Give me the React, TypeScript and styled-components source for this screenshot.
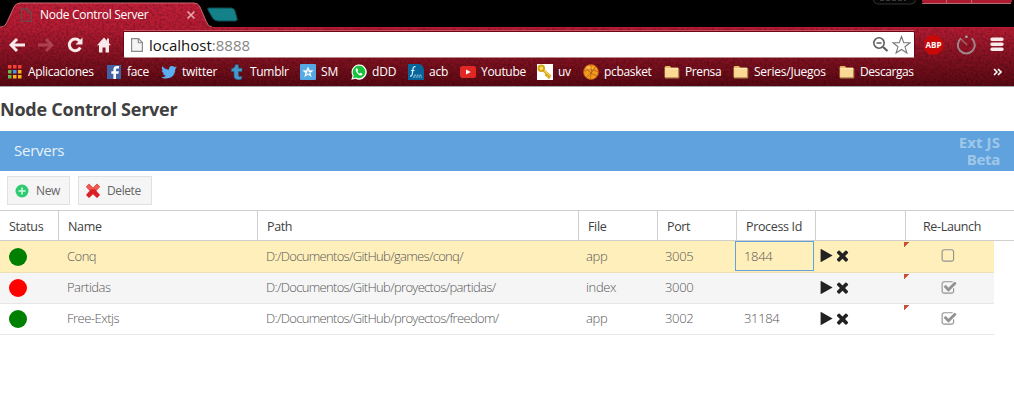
import React from "react";
import styled, { createGlobalStyle } from "styled-components";

const Global = createGlobalStyle`
  * { box-sizing: border-box; }
  html, body { margin: 0; background: #fff; overflow: hidden; }
  body { font-family: "Open Sans", "Noto Sans", sans-serif; }
  svg { display: block; flex: none; }
`;

const Window = styled.div`
  width: 1014px;
  height: 401px;
  overflow: hidden;
`;

/* ---------- browser frame ---------- */
const Frame = styled.header`
  position: relative;
  height: 87px;
  background: #000;
  border-bottom: 1px solid #a6a6a6;
  color: #fff;
`;
const Texture = styled.svg`
  position: absolute;
  left: 0;
  top: 0;
`;
const FrameContent = styled.div`
  position: relative;
  display: flex;
  flex-direction: column;
`;
const TabStrip = styled.div`
  height: 28px;
  padding: 7px 0 0 21px;
  display: flex;
  align-items: flex-start;
`;
const TabTitle = styled.span`
  margin-left: 8px;
  width: 146px;
  font-size: 12px;
  line-height: 16px;
  letter-spacing: -0.3px;
  white-space: nowrap;
`;
const CloseIcon = styled.svg`
  margin-top: 3px;
`;
const Toolbar = styled.div`
  height: 32px;
  display: flex;
  align-items: center;
  padding: 3px 10px 2px 9px;
`;
const NavIcons = styled.div`
  width: 114px;
  display: flex;
  gap: 13px;
`;
const Omnibox = styled.div`
  width: 792px;
  height: 27px;
  display: flex;
  align-items: center;
  padding: 0 3px 0 7px;
  background: #fff;
  border: 1px solid #6e0715;
  border-bottom-color: #b98a88;
  border-radius: 2px;
`;
const Address = styled.span`
  flex: 1;
  margin-left: 6px;
  font-size: 15px;
  line-height: 20px;
  letter-spacing: 0;
  color: #111;
`;
const PortText = styled.span`
  color: #858585;
`;
const Extensions = styled.div`
  flex: 1;
  display: flex;
  align-items: center;
  justify-content: space-between;
  padding-left: 8px;
`;
const RecentIcon = styled.svg`
  margin-right: 3px;
`;
const Bookmarks = styled.nav`
  height: 24px;
  display: flex;
  align-items: center;
  padding-left: 7px;
`;
const Bookmark = styled.div<{ $width: number }>`
  width: ${(p) => p.$width}px;
  flex: none;
  display: flex;
  align-items: center;
  gap: 5px;
`;
const BookmarkLabel = styled.span<{ $spacing: number }>`
  font-size: 12px;
  line-height: 16px;
  letter-spacing: ${(p) => p.$spacing}px;
  white-space: nowrap;
`;
const Overflow = styled.div`
  flex: 1;
  display: flex;
  justify-content: flex-end;
  padding-right: 12px;
`;

/* ---------- page ---------- */
const PageTitle = styled.h1`
  margin: 0;
  height: 44px;
  font-size: 18px;
  line-height: 44px;
  font-weight: 700;
  letter-spacing: -0.24px;
  color: #404040;
`;
const PanelHeader = styled.div`
  height: 40px;
  display: flex;
  align-items: center;
  justify-content: space-between;
  padding: 0 14px;
  background: #5fa2dd;
  color: #e9f2fb;
  font-size: 15px;
`;
const PanelTitle = styled.span`
  padding-bottom: 2px;
  letter-spacing: -0.25px;
`;
const BetaTag = styled.span`
  display: flex;
  flex-direction: column;
  align-items: flex-end;
  font-family: "Noto Sans", sans-serif;
  font-size: 15px;
  line-height: 17px;
  font-weight: 700;
  color: #9fc7ea;
`;
const TagWord = styled.span<{ $spacing: number }>`
  letter-spacing: ${(p) => p.$spacing}px;
`;
const Actions = styled.div`
  height: 39px;
  display: flex;
  gap: 8px;
  padding: 5px 7px;
`;
const Button = styled.button<{ $width: number }>`
  width: ${(p) => p.$width}px;
  height: 29px;
  display: flex;
  align-items: center;
  gap: 6px;
  padding: 0 6px;
  border: 1px solid #e1e1e1;
  background: #f5f5f5;
  color: #666;
  font: 12px "Open Sans", sans-serif;
  letter-spacing: -0.4px;
`;
const columns = "58px 199px 321px 79px 79px 79px 90px 1fr";
const HeaderRow = styled.div`
  height: 31px;
  display: grid;
  grid-template-columns: ${columns};
  border-top: 1px solid #cfcfcf;
  border-bottom: 1px solid #cfcfcf;
`;
const HeaderCell = styled.div<{ $first?: boolean; $center?: boolean }>`
  border-left: ${(p) => (p.$first ? "0" : "1px solid #cfcfcf")};
  padding-left: ${(p) => (p.$center ? 17 : 9)}px;
  padding-top: 2px;
  font-size: 12.5px;
  line-height: 28px;
  letter-spacing: -0.35px;
  white-space: nowrap;
  color: #404040;
`;
const Row = styled.div<{ $tone: string; $height: number }>`
  width: 994px;
  height: ${(p) => p.$height}px;
  display: grid;
  grid-template-columns: ${columns};
  border-bottom: 1px solid ${(p) => (p.$tone === "#ffefbb" ? "#ede2b5" : "#e6e6e6")};
  background: ${(p) => p.$tone};
`;
const Cell = styled.div<{ $spacing?: number; $inset?: number }>`
  display: flex;
  align-items: center;
  padding: 0 0 2px ${(p) => p.$inset ?? 8}px;
  font-size: 13px;
  font-weight: 300;
  letter-spacing: ${(p) => p.$spacing ?? -0.35}px;
  white-space: nowrap;
  color: #585858;
`;
const StatusCell = styled.div`
  display: flex;
  align-items: center;
  padding-left: 9px;
`;
const FocusCell = styled(Cell)<{ $focus: boolean }>`
  margin: 0 ${(p) => (p.$focus ? "1px 1px" : "0 0")} -1px;
  padding-bottom: ${(p) => (p.$focus ? 1 : 2)}px;
  border: 1px solid ${(p) => (p.$focus ? "#5fa2dd" : "transparent")};
`;
const StatusDot = styled.span<{ $up: boolean }>`
  width: 18px;
  height: 18px;
  border-radius: 50%;
  background: ${(p) => (p.$up ? "#008000" : "#f00")};
`;
const IconCell = styled.div`
  display: flex;
  align-items: center;
  padding: 0 0 2px 4px;
`;
const CheckCell = styled.div`
  display: flex;
  align-items: center;
  margin-left: -1px;
  padding: 0 0 1px 37px;
  background: linear-gradient(135deg, #cf4c35 0 3.5px, transparent 3.9px) 0 1px no-repeat;
`;

const PLAY = "M1576 927l-1328 738q-23 13-39.5 3t-16.5-36v-1472q0-26 16.5-36t39.5 3l1328 738q23 13 23 31t-23 31z";
const TIMES = "M1490 1322q0 40-28 68l-136 136q-28 28-68 28t-68-28l-294-294-294 294q-28 28-68 28t-68-28l-136-136q-28-28-28-68t28-68l294-294-294-294q-28-28-28-68t28-68l136-136q28-28 68-28t68 28l294 294 294-294q28-28 68-28t68 28l136 136q28 28 28 68t-28 68l-294 294 294 294q28 28 28 68z";
const CHECKED = "M1472 930v318q0 119-84.5 203.5t-203.5 84.5h-832q-119 0-203.5-84.5t-84.5-203.5v-832q0-119 84.5-203.5t203.5-84.5h832q63 0 117 25 15 7 18 23 3 17-9 29l-49 49q-10 10-23 10-3 0-9-2-23-6-45-6h-832q-66 0-113 47t-47 113v832q0 66 47 113t113 47h832q66 0 113-47t47-113v-254q0-13 9-22l64-64q10-10 23-10 6 0 12 3 20 8 20 29zm231-489l-814 814q-24 24-57 24t-57-24l-430-430q-24-24-24-57t24-57l110-110q24-24 57-24t57 24l263 263 647-647q24-24 57-24t57 24l110 110q24 24 24 57t-24 57z";
const UNCHECKED = "M1184 256h-832q-66 0-113 47t-47 113v832q0 66 47 113t113 47h832q66 0 113-47t47-113v-832q0-66-47-113t-113-47zm288 160v832q0 119-84.5 203.5t-203.5 84.5h-832q-119 0-203.5-84.5t-84.5-203.5v-832q0-119 84.5-203.5t203.5-84.5h832q119 0 203.5 84.5t84.5 203.5z";

const Glyph = ({ d, size, fill }: { d: string; size: number; fill: string }) => (
  <svg width={size} height={size} viewBox="0 0 1792 1792"><path d={d} fill={fill} /></svg>
);

const Icon = ({ children }: { children: React.ReactNode }) => (
  <svg width="16" height="16" viewBox="0 0 16 16">{children}</svg>
);

const PageIcon = ({ stroke, fill, w = 11 }: { stroke: string; fill: string; w?: number }) => (
  <svg width={w} height="16" viewBox={`0 0 ${w} 16`}>
    <path d={`M.6 1.600H${w - 4.500}L${w - 0.6} 5.500V14.400H.6Z`} fill={fill} stroke={stroke} strokeWidth="1.200" />
    <path d={`M${w - 4.700} 1.800V5.700H${w - 0.7}`} fill="none" stroke={stroke} strokeWidth="1.100" />
  </svg>
);

const Folder = () => (
  <Icon>
    <path d="M.6 13.4V3.2L1.6 2H6L7.2 3.4H14V13.4Z" fill="#e5b861" />
    <path d="M1.2 4.4H14.6V13.6H1.2Z" fill="#fbd894" />
    <path d="M1.2 4.7H14.4" stroke="#fff0c6" />
    <path d="M14.8 5V14H1" fill="none" stroke="#ad8450" />
  </Icon>
);

const appColors = ["#f44336", "#f44336", "#f44336", "#66bb4a", "#3c9be8", "#f7b51b", "#66bb4a", "#f7b51b", "#f7b51b"];

const bookmarks: { label: string; width: number; spacing: number; icon: React.ReactNode }[] = [
  {
    label: "Aplicaciones", width: 99, spacing: -0.3,
    icon: <Icon>{appColors.map((c, i) => <rect key={i} x={1 + (i % 3) * 5} y={1 + Math.floor(i / 3) * 5} width="3.5" height="3.5" fill={c} />)}</Icon>,
  },
  {
    label: "face", width: 55, spacing: -0.3,
    icon: <Icon><rect width="14" height="14" x="1" y="1" fill="#4461a4" /><path d="M10 15V9.8h2.4l.4-2.5H10V5.7c0-.9.4-1.3 1.4-1.3H13V2.1c-3.6-.6-5.600.4-5.600 3.2v2H5.3v2.5h2.1V15Z" fill="#fff" /></Icon>,
  },
  {
    label: "twitter", width: 68, spacing: -0.25,
    icon: <Icon><path d="M16 3.5c-.6.3-1.200.4-1.900.5.7-.4 1.200-1 1.400-1.800-.6.4-1.300.6-2.100.8C12 1.500 9.500 1.700 8.400 3.400c-.5.8-.6 1.600-.5 2.300C5.200 5.500 2.900 4.300 1.300 2.300c-.9 1.500-.4 3.400 1 4.400-.5 0-1-.2-1.500-.4 0 1.600 1.100 2.900 2.700 3.200-.5.1-1 .1-1.500 0 .4 1.300 1.600 2.200 3.100 2.300C3.700 12.900 1.900 13.400 0 13.200c5 3.100 14.300 1.300 14.300-8.100.7-.4 1.200-1 1.700-1.600Z" fill="#5caef1" /></Icon>,
  },
  {
    label: "Tumblr", width: 71, spacing: -0.3,
    icon: <Icon><path d="M6.300.8H9.500V4.200H13V7.500H9.500V11.300C9.500 12.800 11 12.900 12.700 12V15C9 16.500 5 15.600 5 12V7.500H2.500V4.800C5 4.300 6 3.200 6.300.8Z" fill="#4499cc" stroke="#245f80" strokeWidth=".6" /></Icon>,
  },
  {
    label: "SM", width: 51, spacing: 0,
    icon: <Icon><rect width="16" height="16" rx="1" fill="#55a9e4" /><path d="M8 2.500 9.700 6.300 13.500 6.500 10.500 9 11.600 13 8 10.800 4.300 13 5.400 9 2.400 6.500 6.400 6.300Z" fill="#fff" /><path d="M8 5 8.800 8 11 8 9 9.400 9.500 11 7.800 9.800 6 11 6.800 9Z" fill="#78bce9" /></Icon>,
  },
  {
    label: "dDD", width: 57, spacing: -0.1,
    icon: <Icon><path d="M.3 15.800 1.500 11.700A7.600 7.600 0 1 1 4.500 14.700Z" fill="#fff" /><path d="M1.900 14.300 2.800 11.500A6.300 6.300 0 1 1 5 13.500Z" fill="#16c33b" /><path d="M5.400 4.200C4 5 4.400 7.200 6.400 9.400S10.500 12 11.500 10.500L11.200 9.500 9.600 8.800 8.700 9.700C7.700 9.200 6.900 8.300 6.500 7.400L7.100 6.500 6.400 4.500Z" fill="#fff" /></Icon>,
  },
  {
    label: "acb", width: 52, spacing: -0.2,
    icon: <Icon><path d="M0 0H11Q16 1 16 7V16H0Z" fill="#06669c" /><path d="M7.500 2.800Q5 2.300 5 5L4.300 10Q3.800 12.500 2 12M3 6.500H6.500" fill="none" stroke="#e3f1f8" strokeWidth="1.200" /><path d="M6 11.200H14M5 13H14" stroke="#a4cbe0" strokeDasharray="2 .7" /></Icon>,
  },
  {
    label: "Youtube", width: 77, spacing: -0.3,
    icon: <Icon><rect y="2" width="16" height="12" rx="2.500" fill="#df2724" /><path d="M6 5.500 10.800 8 6 10.500Z" fill="#fff" /></Icon>,
  },
  {
    label: "uv", width: 46, spacing: -0.4,
    icon: <Icon><rect width="16" height="16" fill="#fff" /><path d="M6.500 6.500 13.500 12.500M10.500 10 8.500 12M12.800 12 11 14" stroke="#dba817" strokeWidth="2.800" /><circle cx="4.300" cy="4.300" r="2.800" fill="#f8e468" stroke="#d6a617" strokeWidth="2" /><path d="M7 6.500 13 11.700" stroke="#fae26b" /></Icon>,
  },
  {
    label: "pcbasket", width: 81, spacing: -0.32,
    icon: <Icon><circle cx="8" cy="8" r="7.500" fill="#f39a20" stroke="#b9560f" strokeWidth=".8" /><ellipse cx="6" cy="4.500" rx="4" ry="2.500" fill="#ffb640" /><path d="M1 7Q8 4 15.300 8M7.500.7Q9.500 6 7 15.500M2 3Q7 10 14.300 12M12.800 2.500Q10 8 3 13.800" stroke="#a04a0c" strokeWidth=".6" fill="none" /></Icon>,
  },
  { label: "Prensa", width: 69, spacing: -0.4, icon: <Folder /> },
  { label: "Series/Juegos", width: 106, spacing: -0.24, icon: <Folder /> },
  { label: "Descargas", width: 90, spacing: -0.42, icon: <Folder /> },
];

const servers = [
  { up: true, name: "Conq", path: "D:/Documentos/GitHub/games/conq/", file: "app", port: "3005", pid: "1844", relaunch: false, tone: "#ffefbb", height: 32 },
  { up: false, name: "Partidas", path: "D:/Documentos/GitHub/proyectos/partidas/", file: "index", port: "3000", pid: "", relaunch: true, tone: "#f5f5f5", height: 31 },
  { up: true, name: "Free-Extjs", path: "D:/Documentos/GitHub/proyectos/freedom/", file: "app", port: "3002", pid: "31184", relaunch: true, tone: "#ffffff", height: 31 },
];

const tabShape = "M0 27C5 27 6 24 8 20L14 7Q16 3 20 3H194Q198 3 200 7L206 21Q208 27 212 27";

const FrameTexture = () => (
  <Texture width="1014" height="86" viewBox="0 0 1014 86">
    <defs>
      <linearGradient id="red" x1="0" x2="0" y1="0" y2="86" gradientUnits="userSpaceOnUse">
        <stop offset="0" stopColor="#c5203a" />
        <stop offset=".32" stopColor="#b61c33" />
        <stop offset=".6" stopColor="#8e1425" />
        <stop offset="1" stopColor="#5a0914" />
      </linearGradient>
      <filter id="grain" x="0" y="0" width="100%" height="100%">
        <feTurbulence type="fractalNoise" baseFrequency=".42" numOctaves="2" seed="6" />
        <feColorMatrix values="0 0 0 0 0  0 0 0 0 0  0 0 0 0 0  1.500 0 0 0 -.55" />
        <feComposite in2="SourceGraphic" operator="in" />
      </filter>
    </defs>
    <path d={`${tabShape}H1014V86H0Z`} fill="url(#red)" />
    <path d={`${tabShape}H1014V86H0Z`} fill="#000" filter="url(#grain)" opacity=".38" />
    <path d="M212 27.500H1014" stroke="#b91c31" />
    <path d="M124 30.500H914" stroke="#d0606e" opacity=".8" />
    <path d={tabShape} fill="none" stroke="#cf6470" />
    <path d="M209 8H231Q234 8 235 11L237 18Q238 21 235 21H218Q214 21 212 17L208 10Q207 8 209 8Z" fill="#148087" stroke="#0b4f55" />
    <path d="M873.500 0Q874 4 879 4H911Q915 4 915.500 0" fill="#050505" stroke="#333" />
    <path d="M880 0H906" stroke="#383838" strokeWidth="2" strokeDasharray="4 2" />
    <path d="M922 0H1012V1Q1012 3 1009 3H925Q922 3 922 1Z" fill="#ad1b30" />
    <path d="M922 3.500H1011M946.500 0V3M971.500 0V3" stroke="#b66b76" />
  </Texture>
);

export default function App() {
  return (
    <Window>
      <Global />
      <Frame>
        <FrameTexture />
        <FrameContent>
          <TabStrip>
            <PageIcon stroke="#6b4a4e" fill="none" w={11} />
            <TabTitle>Node Control Server</TabTitle>
            <CloseIcon width="10" height="10" viewBox="0 0 10 10">
              <path d="M1.500 1.500 8.500 8.500M8.500 1.500 1.500 8.500" stroke="#e7a9b1" strokeWidth="1.600" />
            </CloseIcon>
          </TabStrip>
          <Toolbar>
            <NavIcons>
              <svg width="16" height="16" viewBox="0 0 16 16"><path d="M8 2 2 8 8 14M2.500 8H16" fill="none" stroke="#fae9eb" strokeWidth="3" /></svg>
              <svg width="16" height="16" viewBox="0 0 16 16"><path d="M8 2 14 8 8 14M0 8H13.500" fill="none" stroke="#bb5661" strokeWidth="3" opacity=".7" /></svg>
              <svg width="16" height="16" viewBox="0 0 16 16"><path d="M12.500 4A5.800 5.800 0 1 0 13.300 10.500" fill="none" stroke="#fae9eb" strokeWidth="3" /><path d="M15.500 .5V7.500H8.500Z" fill="#fae9eb" /></svg>
              <svg width="16" height="16" viewBox="0 0 16 16"><path d="M1 8.300 8 .5 15 8.300H13V15.500H9.500V10.500H6.500V15.500H3V8.300Z" fill="#fae9eb" /><path d="M11 1.500H13V6H11Z" fill="#fae9eb" /></svg>
            </NavIcons>
            <Omnibox>
              <PageIcon stroke="#8b8b8b" fill="#f5f5f5" w={12} />
              <Address>localhost<PortText>:8888</PortText></Address>
              <svg width="17" height="17" viewBox="0 0 17 17"><circle cx="7" cy="7" r="5.200" fill="none" stroke="#5d5d5d" strokeWidth="1.600" /><path d="M4.500 7H9.500" stroke="#5d5d5d" strokeWidth="1.500" /><path d="M11 11 15.500 15" stroke="#5d5d5d" strokeWidth="2.200" /></svg>
              <svg width="22" height="20" viewBox="0 0 22 20"><path d="M12.500 1.500 14.700 7.700 21 7.800 16 11.800 17.900 18 12.500 14.500 7.100 18 9 11.800 4 7.800 10.300 7.700Z" fill="#fff" stroke="#777" strokeWidth="1.100" /></svg>
            </Omnibox>
            <Extensions>
              <svg width="21" height="20" viewBox="0 0 21 20">
                <path d="M6.500 .5H14.500L20 6V14L14.500 19.500H6.500L1 14V6Z" fill="#cb0808" />
                <text x="10.500" y="13.400" textAnchor="middle" textLength="16" lengthAdjust="spacingAndGlyphs" fontFamily="Open Sans" fontWeight="700" fontSize="9.500" fill="#fff">ABP</text>
              </svg>
              <RecentIcon width="20" height="20" viewBox="0 0 20 20"><path d="M5 3.300A8.500 8.500 0 1 0 15.600 3.300" fill="none" stroke="#a08589" strokeWidth="2" /><circle cx="10.500" cy="1.800" r="1.300" fill="#aaa" /><path d="M5 4 11 10" stroke="#9c6b70" strokeWidth="1.200" /></RecentIcon>
              <svg width="14" height="15" viewBox="0 0 14 15"><path d="M2 2.300H12M2 7.300H12M2 12.300H12" stroke="#fae9eb" strokeWidth="3.400" strokeLinecap="round" /></svg>
            </Extensions>
          </Toolbar>
          <Bookmarks>
            {bookmarks.map((b) => (
              <Bookmark key={b.label} $width={b.width}>
                {b.icon}
                <BookmarkLabel $spacing={b.spacing}>{b.label}</BookmarkLabel>
              </Bookmark>
            ))}
            <Overflow>
              <svg width="9" height="8" viewBox="0 0 9 8"><path d="M1 1 4 4 1 7M5 1 8 4 5 7" fill="none" stroke="#fff" strokeWidth="1.600" /></svg>
            </Overflow>
          </Bookmarks>
        </FrameContent>
      </Frame>

      <main>
        <PageTitle>Node Control Server</PageTitle>
        <PanelHeader>
          <PanelTitle>Servers</PanelTitle>
          <BetaTag>
            <TagWord $spacing={0.1}>Ext JS</TagWord>
            <TagWord $spacing={-0.3}>Beta</TagWord>
          </BetaTag>
        </PanelHeader>
        <Actions>
          <Button $width={63}>
            <Icon><circle cx="8" cy="8" r="6.500" fill="#2ecc71" /><path d="M8 4.500V11.500M4.500 8H11.500" stroke="#d7f7e4" strokeWidth="1.600" /></Icon>
            New
          </Button>
          <Button $width={74}>
            <Icon>
              <path d="M4 .8 8 4.700 12 .8 15 3.800 11.300 7.800 15 12 12 15 8 11.200 4 15 1 12 4.700 7.800 1 3.800Z" fill="#dc1e27" />
              <path d="M4 .8 8 4.700 12 .8 15 3.800 12 7Q8 5.500 4 7L1 3.800Z" fill="#ed5b50" />
            </Icon>
            Delete
          </Button>
        </Actions>
        <HeaderRow>
          <HeaderCell $first>Status</HeaderCell>
          <HeaderCell>Name</HeaderCell>
          <HeaderCell>Path</HeaderCell>
          <HeaderCell>File</HeaderCell>
          <HeaderCell>Port</HeaderCell>
          <HeaderCell>Process Id</HeaderCell>
          <HeaderCell />
          <HeaderCell $center>Re-Launch</HeaderCell>
        </HeaderRow>
        {servers.map((s) => (
          <Row key={s.name} $tone={s.tone} $height={s.height}>
            <StatusCell><StatusDot $up={s.up} /></StatusCell>
            <Cell $inset={9} $spacing={-0.5}>{s.name}</Cell>
            <Cell $inset={9} $spacing={-0.67}>{s.path}</Cell>
            <Cell>{s.file}</Cell>
            <Cell>{s.port}</Cell>
            <FocusCell $focus={s.pid === "1844"}>{s.pid}</FocusCell>
            <IconCell>
              <Glyph d={PLAY} size={15} fill="#222" />
              <Glyph d={TIMES} size={17} fill="#222" />
            </IconCell>
            <CheckCell><Glyph d={s.relaunch ? CHECKED : UNCHECKED} size={16} fill="#929292" /></CheckCell>
          </Row>
        ))}
      </main>
    </Window>
  );
}
